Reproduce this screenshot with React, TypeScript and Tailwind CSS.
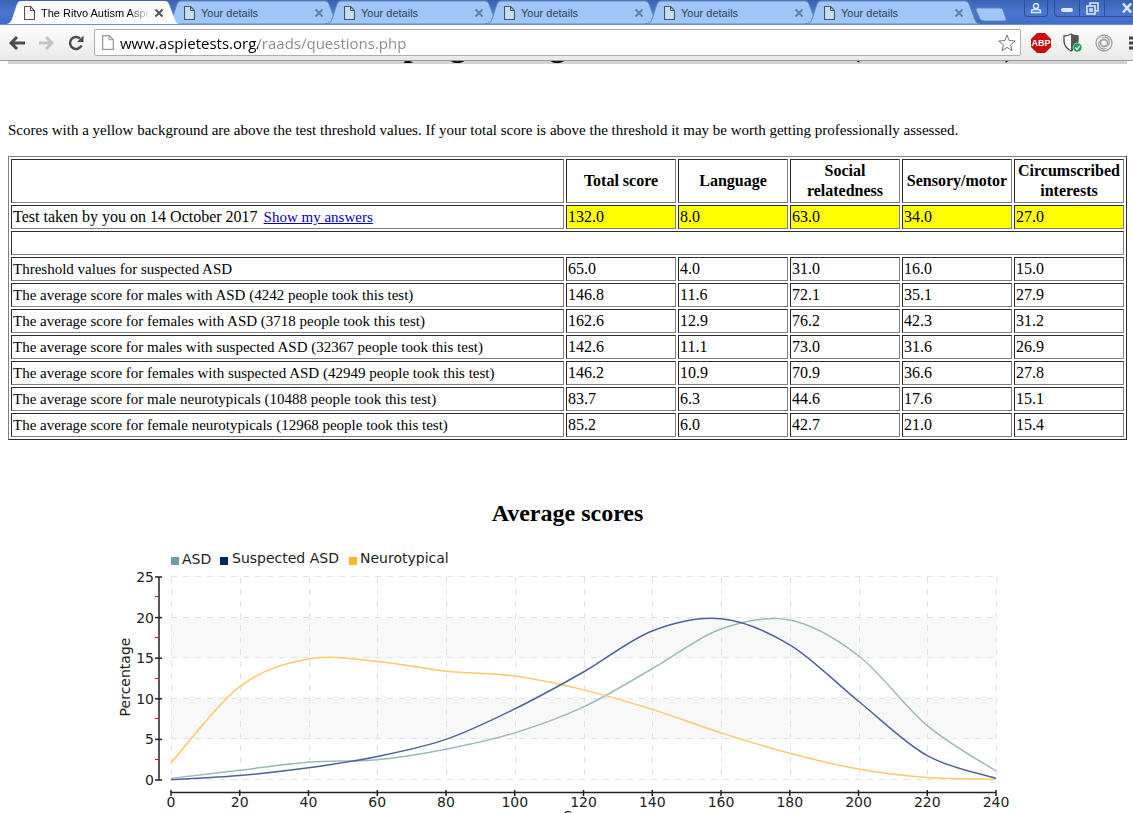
const tabs = [
  { title: "The Ritvo Autism Aspe", active: true },
  { title: "Your details" },
  { title: "Your details" },
  { title: "Your details" },
  { title: "Your details" },
  { title: "Your details" },
];

const columns = ["Total score", "Language", "Social relatedness", "Sensory/motor", "Circumscribed interests"];

const averages = [
  { label: "Threshold values for suspected ASD", scores: ["65.0", "4.0", "31.0", "16.0", "15.0"] },
  { label: "The average score for males with ASD (4242 people took this test)", scores: ["146.8", "11.6", "72.1", "35.1", "27.9"] },
  { label: "The average score for females with ASD (3718 people took this test)", scores: ["162.6", "12.9", "76.2", "42.3", "31.2"] },
  { label: "The average score for males with suspected ASD (32367 people took this test)", scores: ["142.6", "11.1", "73.0", "31.6", "26.9"] },
  { label: "The average score for females with suspected ASD (42949 people took this test)", scores: ["146.2", "10.9", "70.9", "36.6", "27.8"] },
  { label: "The average score for male neurotypicals (10488 people took this test)", scores: ["83.7", "6.3", "44.6", "17.6", "15.1"] },
  { label: "The average score for female neurotypicals (12968 people took this test)", scores: ["85.2", "6.0", "42.7", "21.0", "15.4"] },
];

const series = [
  { name: "ASD", color: "#9cb9bd", values: [0.2, 1.2, 2.2, 2.5, 3.8, 5.8, 9, 13.7, 18.6, 19.7, 15.3, 6.7, 1.1] },
  { name: "Neurotypical", color: "#fbc96a", values: [2.1, 11.5, 14.9, 14.6, 13.4, 12.8, 11.1, 8.7, 5.8, 3.3, 1.35, 0.3, 0.1] },
  { name: "Suspected ASD", color: "#4c6394", values: [0.05, 0.55, 1.5, 2.9, 5, 8.75, 13.3, 18.35, 19.85, 16.65, 9.7, 3, 0.2] },
];

const xAt = (i: number) => 59 + (i * 825) / 12;
const yAt = (v: number) => 235 - v * 8.12;

// Smooth line through the points (Catmull-Rom turned into cubic Béziers)
function curve(values: number[]) {
  const at = (i: number) => {
    const k = Math.max(0, Math.min(values.length - 1, i));
    return [xAt(k), yAt(values[k])];
  };
  let d = `M${at(0)}`;
  for (let i = 0; i < values.length - 1; i++) {
    const [p0, p1, p2, p3] = [at(i - 1), at(i), at(i + 1), at(i + 2)];
    const c1 = [p1[0] + (p2[0] - p0[0]) / 6, p1[1] + (p2[1] - p0[1]) / 6];
    const c2 = [p2[0] - (p3[0] - p1[0]) / 6, p2[1] - (p3[1] - p1[1]) / 6];
    d += `C${c1} ${c2} ${p2}`;
  }
  return d;
}

function PageIcon({ className }: { className: string }) {
  return (
    <svg viewBox="0 0 11 14" className={`shrink-0 ${className}`} fill="none" stroke="currentColor" aria-hidden="true">
      <path d="M0.5 0.5H6.5L10.5 4.5V13.5H0.5Z" fill="white" fillOpacity="0.4" strokeWidth="1.2" />
      <path d="M6.5 0.5V4.5H10.5" />
    </svg>
  );
}

function CloseIcon() {
  return (
    <svg width="10" height="10" stroke="currentColor" strokeWidth="2" aria-hidden="true">
      <path d="M1.5 1.5L8.5 8.5M8.5 1.5L1.5 8.5" />
    </svg>
  );
}

function Tab({ title, active }: { title: string; active?: boolean }) {
  return (
    <div className={`relative h-6 w-40 shrink-0 ${active ? "z-10" : ""}`}>
      <svg className="absolute top-0 left-0 overflow-visible" width="174" height="24" aria-hidden="true">
        <path
          d="M-3 24C1 24 3 22 4 19L9 4Q10 1 13 1H157Q160 1 161 4L167 20Q168 24 172 24Z"
          fill={active ? "#fdfdfd" : "#a0c6f7"}
          stroke={active ? "none" : "#6486bb"}
        />
      </svg>
      <div className="relative flex h-full items-center pt-0.5 pl-4">
        <PageIcon className={`h-3.5 w-[11px] ${active ? "text-[#555]" : "text-[#4d5561]"}`} />
        <span
          className={`ml-1.5 min-w-0 flex-1 overflow-hidden font-['Liberation_Sans',sans-serif] text-[11px] leading-4 whitespace-nowrap ${
            active ? "[mask-image:linear-gradient(to_right,black_80%,transparent)]" : "text-[#2c4060]"
          }`}
        >
          {title}
        </span>
        <button aria-label="Close tab" className={`ml-1 pr-1 ${active ? "text-[#555]" : "text-[#6580a8]"}`}>
          <CloseIcon />
        </button>
      </div>
    </div>
  );
}

function TitleBar() {
  return (
    <div className="flex h-[25px] overflow-hidden border-b border-[#6d8fc9] bg-linear-to-b from-[#3a62b4] via-[#4a76d0] to-[#3f6cc6] pl-2">
      {tabs.map((tab, i) => (
        <Tab key={i} title={tab.title} active={tab.active} />
      ))}
      <button aria-label="New tab" className="mt-1.5 ml-2 h-4 shrink-0">
        <svg width="31" height="15">
          <path d="M1 1H24Q26 1 27 3L30 12Q31 14 28 14H8Q5 14 4 12L0 3Q0 1 1 1Z" fill="#a0c6f7" stroke="#6486bb" />
        </svg>
      </button>
      <div className="ml-auto flex h-[17px] shrink-0 gap-1.5 text-[#dce8fb]">
        <button aria-label="Profile" className="flex w-6 items-center justify-center rounded-b border border-t-0 border-[#2d4f95]">
          <svg width="12" height="12" fill="none" stroke="currentColor" strokeWidth="1.4">
            <circle cx="6" cy="4" r="2.5" />
            <path d="M1.5 10.5V9Q1.5 7.5 4 7.5H8Q10.5 7.5 10.5 9V10.5Z" />
          </svg>
        </button>
        <div className="flex rounded-bl border border-t-0 border-r-0 border-[#2d4f95]">
          <button aria-label="Minimize" className="flex w-6 items-center justify-center">
            <span className="mt-1 h-1 w-3 rounded-sm bg-[#dce8fb]" />
          </button>
          <button aria-label="Restore" className="flex w-[26px] items-center justify-center border-x border-[#2d4f95]">
            <svg width="13" height="13" fill="none" stroke="currentColor" strokeWidth="1.6">
              <path d="M4 4V1H12V9H9M1 4H9V12H1ZM4 7H6V9H4Z" />
            </svg>
          </button>
          <button aria-label="Close" className="flex w-7 items-center justify-end">
            <svg width="12" height="12" stroke="currentColor" strokeWidth="2.6">
              <path d="M2 1.5L10 10.5M10 1.5L2 10.5" />
            </svg>
          </button>
        </div>
      </div>
    </div>
  );
}

function Toolbar() {
  return (
    <div className="flex h-9 items-center border-b border-[#9a9a9a] bg-linear-to-b from-[#fdfdfd] to-[#e9e9e9] pl-2">
      <button aria-label="Back" className="text-[#4c4c4c]">
        <svg width="18" height="16" fill="none" stroke="currentColor" strokeWidth="3">
          <path d="M9 2L3 8L9 14M3 8H17" />
        </svg>
      </button>
      <button aria-label="Forward" className="ml-3 text-[#c4c4c4]">
        <svg width="18" height="16" fill="none" stroke="currentColor" strokeWidth="3">
          <path d="M8 2L14 8L8 14M14 8H1" />
        </svg>
      </button>
      <button aria-label="Reload" className="ml-3 text-[#4c4c4c]">
        <svg width="16" height="16" fill="none" stroke="currentColor" strokeWidth="2.5">
          <path d="M13.5 10.5A6 6 0 1 1 12 3.5" />
          <path d="M15.5 0.5V7H9Z" fill="currentColor" stroke="none" />
        </svg>
      </button>
      <div className="ml-2.5 flex h-[27px] min-w-0 flex-1 items-center rounded-xs border border-[#b5aaa5] bg-white pr-1 pl-[7px]">
        <PageIcon className="h-[15px] w-3 text-[#999]" />
        <input
          aria-label="Address"
          className="ml-1.5 min-w-0 flex-1 bg-[linear-gradient(to_right,#000_138px,#888_138px)] bg-clip-text text-[15px] leading-5 text-transparent outline-none"
          defaultValue="www.aspietests.org/raads/questions.php"
        />
        <button aria-label="Bookmark">
          <svg width="18" height="18" fill="white" stroke="#777">
            <path d="M9 1L11.2 6.5L17.2 7L12.6 10.8L14 16.7L9 13.4L4 16.7L5.4 10.8L0.8 7L6.8 6.5Z" />
          </svg>
        </button>
      </div>
      <div className="flex shrink-0 items-center gap-3 pl-2.5">
        <button aria-label="Adblock Plus">
          <svg width="20" height="20">
            <path d="M6 0H14L20 6V14L14 20H6L0 14V6Z" fill="#c70d0d" />
            <text
              x="10"
              y="13"
              textAnchor="middle"
              fill="white"
              className="font-['Liberation_Sans',sans-serif] text-[9px] font-bold"
            >
              ABP
            </text>
          </svg>
        </button>
        <button aria-label="Site safety">
          <svg width="20" height="20">
            <path d="M8 1Q11 3 15 3V8Q15 14 8 18Q1 14 1 8V3Q5 3 8 1Z" fill="white" stroke="#555" strokeWidth="1.4" />
            <path d="M8 1Q11 3 15 3V8Q15 14 8 18Z" fill="#555" />
            <circle cx="14.5" cy="14.5" r="4.5" fill="#14a45c" stroke="white" strokeWidth="0.5" />
            <path d="M12.3 14.5L14 16.2L16.7 13" fill="none" stroke="white" strokeWidth="1.3" />
          </svg>
        </button>
        <button aria-label="Extension">
          <svg width="18" height="18" fill="none" stroke="#a0a0a0" strokeWidth="1.3">
            <circle cx="9" cy="9" r="8" />
            <path d="M12.5 9A3.5 3.5 0 1 0 9 12.5C13 12.5 15 9.5 14 6C13 3.500 10 2.500 7 3.500" />
            <path d="M5.5 9A3.5 3.5 0 1 0 9 5.5C5 5.5 3 8.5 4 12C5 14.5 8 15.500 11 14.500" />
          </svg>
        </button>
        <button aria-label="Menu" className="ml-1 w-1 overflow-hidden">
          <svg width="16" height="16" stroke="#444" strokeWidth="3">
            <path d="M0 3H16M0 8H16M0 13H16" />
          </svg>
        </button>
      </div>
    </div>
  );
}

function ScoreTable() {
  const cell = "border border-t-[#2c2c2c] border-r-[#808080] border-b-[#808080] border-l-[#2c2c2c] p-px";

  return (
    <table className="w-full table-fixed border-separate border-spacing-[2px] border border-t-[#808080] border-r-[#2c2c2c] border-b-[#2c2c2c] border-l-[#808080] leading-5">
      <colgroup>
        <col />
        {columns.map((column) => (
          <col key={column} className="w-[110px]" />
        ))}
      </colgroup>
      <thead>
        <tr>
          <td className={cell} />
          {columns.map((column) => (
            <th key={column} scope="col" className={`${cell} font-bold`}>
              {column}
            </th>
          ))}
        </tr>
      </thead>
      <tbody>
        <tr>
          <td className={`${cell} text-[15px]`}>
            <span className="mr-1.5 text-[16px]">Test taken by you on 14 October 2017</span>
            <a href="#answers" className="text-[#0000c8] underline">
              Show my answers
            </a>
          </td>
          {["132.0", "8.0", "63.0", "34.0", "27.0"].map((score) => (
            <td key={score} className={`${cell} bg-[#ffff00]`}>
              {score}
            </td>
          ))}
        </tr>
        <tr>
          <td colSpan={6} className={cell}>
            &nbsp;
          </td>
        </tr>
        {averages.map((row) => (
          <tr key={row.label}>
            <td className={`${cell} text-[15px]`}>{row.label}</td>
            {row.scores.map((score, i) => (
              <td key={i} className={cell}>
                {score}
              </td>
            ))}
          </tr>
        ))}
      </tbody>
    </table>
  );
}

function ScoreChart() {
  return (
    <svg
      width="912"
      height="290"
      className="shrink-0 font-['DejaVu_Sans',sans-serif] text-[14px]"
      fill="#222"
      role="img"
      aria-label="Average scores"
    >
      {/* Alternate bands */}
      <rect x="59" y={yAt(20)} width="825" height={yAt(15) - yAt(20)} fill="#f8f8f8" />
      <rect x="59" y={yAt(10)} width="825" height={yAt(5) - yAt(10)} fill="#f8f8f8" />

      <g stroke="#e2e2e2" strokeDasharray="6 6">
        {[0, 5, 10, 15, 20, 25].map((v) => (
          <path key={v} d={`M59 ${Math.round(yAt(v)) - 0.5}H884`} />
        ))}
        {series[0].values.map((_, i) => (
          <path key={i} d={`M${Math.round(xAt(i)) + 0.5} 32V235`} />
        ))}
      </g>

      {/* Legend */}
      <rect x="59" y="12" width="8" height="8" fill="#6f9ba5" />
      <text x="70" y="19">ASD</text>
      <rect x="108" y="12" width="8" height="8" fill="#002b5c" />
      <text x="120" y="18">Suspected ASD</text>
      <rect x="237" y="12" width="8" height="8" fill="#fbb829" />
      <text x="248" y="18">Neurotypical</text>

      {/* Axes */}
      <g stroke="#222" strokeWidth="1.5">
        <path d="M47 32V235M59 247.5H884" />
        {[0, 5, 10, 15, 20, 25].map((v) => (
          <path key={v} d={`M43 ${yAt(v)}H50`} />
        ))}
        {series[0].values.map((_, i) => (
          <path key={i} d={`M${xAt(i)} 245V251`} />
        ))}
      </g>
      {[2.5, 7.5, 12.5, 17.5, 22.5].map((v) => (
        <path key={v} d={`M43 ${Math.round(yAt(v)) - 0.5}H46`} stroke="#f00000" />
      ))}
      {[0, 5, 10, 15, 20, 25].map((v) => (
        <text key={v} x="42" y={yAt(v) + 5} textAnchor="end">
          {v}
        </text>
      ))}
      {series[0].values.map((_, i) => (
        <text key={i} x={xAt(i)} y="262" textAnchor="middle">
          {i * 20}
        </text>
      ))}
      <text transform="translate(18 132) rotate(-90)" textAnchor="middle">Percentage</text>
      <text x="471" y="276" textAnchor="middle">Score</text>

      {series.map((s) => (
        <path key={s.name} d={curve(s.values)} fill="none" stroke={s.color} strokeWidth="1.5" />
      ))}
    </svg>
  );
}

export default function App() {
  return (
    <div className="flex h-screen flex-col overflow-hidden bg-white font-['Open_Sans',sans-serif] text-black">
      <header className="shrink-0">
        <TitleBar />
        <Toolbar />
      </header>
      <main className="min-h-0 flex-1 overflow-hidden pr-1.5 pl-2 font-['Liberation_Serif',serif] text-[16px]">
        {/* Page heading, scrolled almost out of view */}
        <div className="flex h-[3px] items-end justify-center overflow-hidden bg-[#d3d3d3]">
          <h1 className="shrink-0 text-[32px] leading-[38px] font-bold whitespace-nowrap">
            The Ritvo Autism Asperger Diagnostic Scale-Revised (RAADS-R)
          </h1>
        </div>
        <p className="mt-14 mb-4 text-[15px] leading-5">
          Scores with a yellow background are above the test threshold values. If your total score is above the
          threshold it may be worth getting professionally assessed.
        </p>
        <ScoreTable />
        <h2 className="mt-[59px] text-center text-2xl leading-7 font-bold">Average scores</h2>
        <div className="mt-[18px] flex justify-center">
          <ScoreChart />
        </div>
      </main>
    </div>
  );
}
